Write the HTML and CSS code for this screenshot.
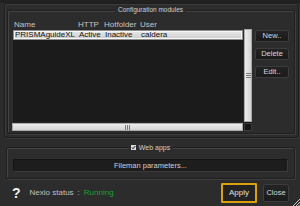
FILE: index.html
```html
<!DOCTYPE html>
<html>
<head>
<meta charset="utf-8">
<link rel="stylesheet" href="styles.css">
</head>
<body>
<div class="dialog">
  <div class="frame">
    <div class="group cfg">
      <div class="legend">Configuration modules</div>
      <div class="cfg-body">
        <div class="table">
          <div class="thead"><span>Name</span><span>HTTP</span><span>Hotfolder</span><span>User</span></div>
          <div class="grid">
            <div class="view">
              <div class="row sel"><span>PRISMAguideXL</span><span>Active</span><span>Inactive</span><span>caldera</span></div>
            </div>
            <div class="vscroll">
              <svg width="5" height="6" viewBox="0 0 5 6"><path d="M0 .5H5M0 2.5H5M0 4.5H5" stroke="#7a7a7a" stroke-width="1"/></svg>
            </div>
            <div class="hscroll">
              <svg width="6" height="5" viewBox="0 0 6 5"><path d="M.5 0V5M2.5 0V5M4.5 0V5" stroke="#7a7a7a" stroke-width="1"/></svg>
            </div>
            <div class="corner"></div>
          </div>
        </div>
        <div class="side">
          <button class="btn">New..</button>
          <button class="btn">Delete</button>
          <button class="btn">Edit..</button>
        </div>
      </div>
    </div>
  </div>
  <div class="group web">
    <div class="legend legend-web">
      <svg class="check" width="5" height="5" viewBox="0 0 5 5"><rect width="5" height="5" fill="#dcdcdc"/><path d="M1 2.5L2 3.8L4.2 1" fill="none" stroke="#1a1a1a" stroke-width="1"/></svg>
      <span>Web apps</span>
    </div>
    <button class="wide">Fileman parameters...</button>
  </div>
  <div class="bottom">
    <span class="help">?</span>
    <span class="status">Nexio status</span>
    <span class="colon">:</span>
    <span class="running">Running</span>
    <button class="apply">Apply</button>
    <button class="close">Close</button>
    <svg class="grip" width="7" height="7" viewBox="0 0 7 7"><path d="M7 0L0 7M7 3L3 7M7 5.5L5.5 7" stroke="#c8c8c8" stroke-width="1"/></svg>
  </div>
</div>
</body>
</html>
```

FILE: styles.css
```css
html, body {
  margin: 0;
  padding: 0;
}
body {
  width: 300px;
  height: 206px;
  overflow: hidden;
  background: #222222;
  font-family: "Liberation Sans", Arial, sans-serif;
  color: #c9c9c9;
}
.dialog {
  box-sizing: border-box;
  height: 206px;
  border-top: 3px solid #212121;
  background: #2c2c2c;
  display: flex;
  flex-direction: column;
}
.frame {
  margin: 0 1px 0 4px;
  border: 1px solid #1d1d1d;
  border-radius: 3px;
  box-shadow: inset 1px 1px 0 #3d3d3d, 1px 1px 0 #383838;
}
.group {
  border: 1px solid #1f1f1f;
  border-radius: 2px;
  box-shadow: inset 1px 1px 0 #444444, 1px 1px 0 #3e3e3e;
}
.cfg {
  margin: 6px 3px 3px 2px;
  padding: 0 5px 2px 4px;
}
.legend {
  margin: -5px auto 0;
  width: max-content;
  padding: 0 3px;
  background: #2c2c2c;
  font-size: 6.5px;
  line-height: 8px;
  color: #cfcfcf;
}
.cfg-body {
  display: flex;
  margin-top: 6px;
}
.table {
  width: 240px;
  display: flex;
  flex-direction: column;
}
.thead, .row {
  display: grid;
  grid-template-columns: 64px 26px 36px 1fr;
  font-size: 8px;
  white-space: nowrap;
}
.thead {
  height: 9px;
  line-height: 9px;
  color: #c4c4c4;
}
.thead span {
  padding-left: 2px;
}
.grid {
  display: grid;
  grid-template-columns: 232px 8px;
  grid-template-rows: 94px 8px;
  background: #161616;
}
.view {
  background: #1b1b1b;
  padding: 1px;
  box-shadow: inset 0 0 0 1px #2a2a2a;
}
.row.sel {
  height: 8px;
  line-height: 8px;
  background: linear-gradient(#e9e9e9, #cdcdcd);
  border: 1px solid #8e8e8e;
  box-shadow: inset 0 0 0 1px #f6f6f6;
  color: #121212;
}
.row span {
  padding-left: 1px;
}
.vscroll {
  margin-bottom: 1px;
  background: linear-gradient(90deg, #f2f2f2, #cfcfcf);
  box-shadow: inset 0 0 0 1px #a9a9a9;
  display: flex;
  align-items: center;
  justify-content: center;
}
.hscroll {
  margin-right: 1px;
  background: linear-gradient(#f2f2f2, #cfcfcf);
  box-shadow: inset 0 0 0 1px #a9a9a9;
  display: flex;
  align-items: center;
  justify-content: center;
}
.corner {
  background: #141414;
  box-shadow: inset 0 0 0 1px #3a3a3a;
}
.side {
  display: flex;
  flex-direction: column;
  gap: 6px;
  padding-top: 10px;
  margin-left: 3px;
}
button {
  font-family: "Liberation Sans", Arial, sans-serif;
  padding: 0;
  margin: 0;
  cursor: default;
}
.btn {
  box-sizing: border-box;
  width: 34px;
  height: 12px;
  background: linear-gradient(#232323, #1a1a1a);
  border: 1px solid #3c3c3c;
  border-radius: 2px;
  color: #d2d6dc;
  font-size: 7.5px;
  line-height: 10px;
}
.web {
  box-sizing: border-box;
  width: 289px;
  margin: 9px 0 0 6px;
  padding: 0 6px 6px;
}
.legend-web {
  display: flex;
  align-items: center;
  gap: 3px;
  font-size: 7px;
  line-height: 9px;
}
.check {
  display: block;
}
.wide {
  display: block;
  box-sizing: border-box;
  width: 100%;
  height: 13px;
  margin-top: 7px;
  background: #1d1d1d;
  border: 1px solid #3a3a3a;
  border-top-color: #151515;
  border-left-color: #151515;
  color: #cfcfcf;
  font-size: 7.5px;
  line-height: 11px;
}
.bottom {
  flex: 1;
  display: flex;
  align-items: center;
  padding-left: 12px;
  font-size: 8px;
}
.help {
  font-size: 14px;
  font-weight: bold;
  color: #f2f2f2;
  line-height: 14px;
}
.status {
  margin-left: 9px;
  color: #c0c0c0;
}
.colon {
  margin-left: 4px;
  color: #c0c0c0;
}
.running {
  margin-left: 4px;
  color: #1f9f36;
}
.apply {
  box-sizing: border-box;
  margin-left: auto;
  width: 36px;
  height: 20px;
  background: #232323;
  border: 2px solid #d9a10e;
  border-radius: 1px;
  color: #e0e0e0;
  font-size: 8px;
}
.close {
  box-sizing: border-box;
  margin-left: 6px;
  width: 26px;
  height: 18px;
  background: linear-gradient(#242424, #1b1b1b);
  border: 1px solid #3c3c3c;
  border-radius: 2px;
  color: #d6d6d6;
  font-size: 7.5px;
}
.grip {
  display: block;
  align-self: flex-end;
  margin-left: 4px;
}
```
